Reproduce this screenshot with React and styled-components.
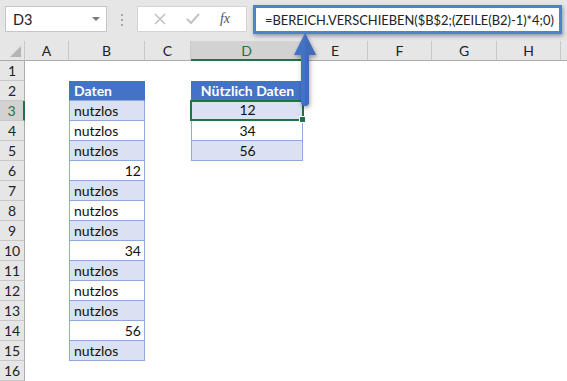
import React from 'react';
import styled, { createGlobalStyle, css } from 'styled-components';

const GlobalStyle = createGlobalStyle`
  html, body { margin: 0; padding: 0; background: #fff; }
  body { font-family: Lato, "Liberation Sans", sans-serif; }
`;

const GREEN = '#217346';
const BLUE = '#4472C4';

const Frame = styled.div`
  position: relative;
  width: 567px;
  height: 381px;
  overflow: hidden;
  background: #fff;
`;

const Toolbar = styled.div`
  display: flex;
  align-items: flex-start;
  height: 41px;
  box-sizing: border-box;
  padding: 6px 5px 0 5px;
  background: #e6e6e6;
`;

const NameBox = styled.div`
  flex-shrink: 0;
  display: flex;
  align-items: center;
  justify-content: space-between;
  box-sizing: border-box;
  width: 102px;
  height: 26px;
  padding: 0 6px 0 7px;
  background: #fff;
  border: 1px solid #c6c6c6;
  font-size: 14.5px;
  color: #222;
`;

const Caret = styled.span`
  width: 0;
  height: 0;
  border-left: 4px solid transparent;
  border-right: 4px solid transparent;
  border-top: 4px solid #777;
`;

const Grip = styled.div`
  flex-shrink: 0;
  display: flex;
  flex-direction: column;
  gap: 3px;
  width: 30px;
  align-items: center;
  padding-top: 8px;
  span {
    width: 2px;
    height: 2px;
    background: #a6a6a6;
  }
`;

const IconBox = styled.div`
  flex-shrink: 0;
  display: flex;
  align-items: center;
  justify-content: space-around;
  box-sizing: border-box;
  width: 110px;
  height: 26px;
  padding: 0 6px;
  background: #fff;
  border: 1px solid #d4d4d4;
`;

const Fx = styled.span`
  font-family: "Liberation Serif", serif;
  font-style: italic;
  font-size: 14px;
  color: #555;
`;

const FormulaBar = styled.div`
  flex: 1;
  min-width: 0;
  display: flex;
  align-items: center;
  box-sizing: border-box;
  height: 29px;
  margin: -1px 0 0 6px;
  padding: 0 6px 0 9px;
  background: #fff;
  border: 3px solid #5180d0;
  box-shadow: 1px 2px 4px rgba(0, 0, 0, 0.35);
  font-size: 12.9px;
  color: #222;
  white-space: nowrap;
  overflow: hidden;
`;

const Sheet = styled.div`
  display: grid;
  grid-template-columns: 25px 44px 76px 46px 112px 65px 64px 65px 64px 1fr;
  grid-auto-rows: 20px;
  font-size: 14px;
  color: #111;
`;

const ColHead = styled.div`
  display: flex;
  align-items: center;
  justify-content: center;
  box-sizing: border-box;
  background: #e6e6e6;
  border-right: 1px solid #c8c8c8;
  border-bottom: 1px solid #ababab;
  color: #222;
  ${p => p.$active && css`
    background: #d2d2d2;
    color: ${GREEN};
    border-bottom: 2px solid ${GREEN};
  `}
`;

const Corner = styled(ColHead)`
  position: relative;
  &::after {
    content: '';
    position: absolute;
    right: 3px;
    bottom: 3px;
    border-left: 11px solid transparent;
    border-bottom: 11px solid #b4b4b4;
  }
`;

const RowHead = styled.div`
  display: flex;
  align-items: center;
  justify-content: center;
  box-sizing: border-box;
  background: #e6e6e6;
  border-right: 1px solid #ababab;
  border-bottom: 1px solid #c8c8c8;
  color: #222;
  ${p => p.$active && css`
    background: #d2d2d2;
    color: ${GREEN};
    border-right: 2px solid ${GREEN};
  `}
`;

const Cell = styled.div`
  position: relative;
  display: flex;
  align-items: flex-end;
  box-sizing: border-box;
  padding: 0 3px 1px 4px;
  justify-content: ${p => p.$align === 'right' ? 'flex-end' : p.$align === 'center' ? 'center' : 'flex-start'};
  ${p => p.$kind && css`
    border-left: 1px solid #8ea9db;
    border-right: 1px solid #8ea9db;
    border-bottom: 1px solid #8ea9db;
  `}
  ${p => p.$kind === 'head' && css`
    background: ${BLUE};
    color: #fff;
    font-weight: 700;
    border-color: ${BLUE};
    border-bottom-color: #8ea9db;
  `}
  ${p => p.$kind === 'band' && css`
    background: #d9e1f2;
  `}
  ${p => p.$selected && css`
    border: 2px solid ${GREEN};
    margin: -1px -1px 0 -1px;
  `}
`;

const Handle = styled.span`
  position: absolute;
  right: -4px;
  bottom: -4px;
  width: 5px;
  height: 5px;
  background: ${GREEN};
  border: 1px solid #fff;
  z-index: 2;
`;

const Arrow = styled.svg`
  position: absolute;
  left: 292px;
  top: 32px;
  filter: drop-shadow(1px 2px 2px rgba(0, 0, 0, 0.35));
  z-index: 3;
`;

const columns = ['A', 'B', 'C', 'D', 'E', 'F', 'G', 'H', ''];

const bColumn = {
  2: { text: 'Daten', kind: 'head' },
  6: { text: '12', kind: 'plain', align: 'right' },
  10: { text: '34', kind: 'plain', align: 'right' },
  14: { text: '56', kind: 'plain', align: 'right' },
};

const dColumn = {
  2: { text: 'Nützlich Daten', kind: 'head', align: 'center' },
  3: { text: '12', kind: 'band', align: 'center', selected: true },
  4: { text: '34', kind: 'plain', align: 'center' },
  5: { text: '56', kind: 'band', align: 'center' },
};

function cellFor(row, col) {
  if (col === 'B' && row >= 2 && row <= 15) {
    if (bColumn[row]) return bColumn[row];
    return { text: 'nutzlos', kind: row % 2 === 1 ? 'band' : 'plain' };
  }
  if (col === 'D' && dColumn[row]) return dColumn[row];
  return null;
}

function XIcon() {
  return (
    <svg width="12" height="12" viewBox="0 0 12 12">
      <path d="M1 1 L11 11 M11 1 L1 11" stroke="#c3c3c3" strokeWidth="1.6" fill="none" />
    </svg>
  );
}

function CheckIcon() {
  return (
    <svg width="14" height="12" viewBox="0 0 14 12">
      <path d="M1 6 L5 10 L13 1" stroke="#c3c3c3" strokeWidth="2" fill="none" />
    </svg>
  );
}

export default function App() {
  const rows = Array.from({ length: 16 }, (_, i) => i + 1);
  return (
    <Frame>
      <GlobalStyle />
      <Toolbar>
        <NameBox>
          D3
          <Caret />
        </NameBox>
        <Grip><span /><span /><span /></Grip>
        <IconBox>
          <XIcon />
          <CheckIcon />
          <Fx>fx</Fx>
        </IconBox>
        <FormulaBar>=BEREICH.VERSCHIEBEN($B$2;(ZEILE(B2)-1)*4;0)</FormulaBar>
      </Toolbar>

      <Sheet>
        <Corner />
        {columns.map((c, i) => (
          <ColHead key={i} $active={c === 'D'}>{c}</ColHead>
        ))}
        {rows.map(r => (
          <React.Fragment key={r}>
            <RowHead $active={r === 3}>{r}</RowHead>
            {columns.map((c, i) => {
              const cell = cellFor(r, c);
              if (!cell) return <Cell key={i} />;
              return (
                <Cell key={i} $kind={cell.kind} $align={cell.align} $selected={cell.selected}>
                  {cell.text}
                  {cell.selected && <Handle />}
                </Cell>
              );
            })}
          </React.Fragment>
        ))}
      </Sheet>

      <Arrow width="26" height="76" viewBox="0 0 26 76">
        <path d="M13 1 L24 23 L17 23 L17 70 Q17 74 13 74 Q9 74 9 70 L9 23 L2 23 Z" fill={BLUE} />
        <path d="M13 1 L24 23 L17 23 L17 70 Q17 74 13 74 L13 1 Z" fill="#3b64b0" opacity="0.5" />
      </Arrow>
    </Frame>
  );
}
